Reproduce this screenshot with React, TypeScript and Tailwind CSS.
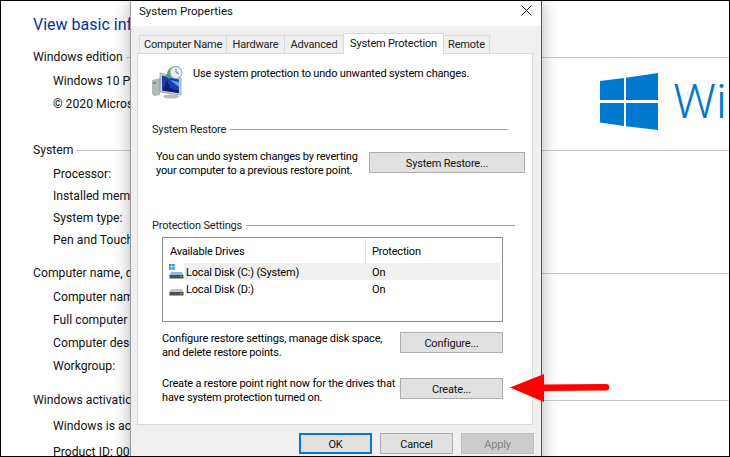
import React from 'react';

const SectionHead = ({ title, className = '' }: { title: string; className?: string }) => (
  <div className={`flex items-center h-[22px] pl-[32px] text-[#111] ${className}`}>
    <span className="whitespace-nowrap">{title}</span>
    <div className="flex-1 h-px bg-[#c8c8c8] ml-[3px]"></div>
  </div>
);

const InfoRow = ({ text, h = 'h-[23px]' }: { text: string; h?: string }) => (
  <div className={`${h} pl-[52px] flex items-center whitespace-nowrap text-[#111]`}>{text}</div>
);

const WinButton = ({ label, className = '' }: { label: string; className?: string }) => (
  <div className={`h-[21px] shrink-0 pt-[2px] flex items-center justify-center bg-[#e1e1e1] border border-[#adadad] text-[#111] ${className}`}>
    {label}
  </div>
);

const Legend = ({ title, className = '' }: { title: string; className?: string }) => (
  <div className={`flex items-center h-[16px] ml-[14px] text-[#222] ${className}`}>
    <span className="whitespace-nowrap pt-[2px]">{title}</span>
    <div className="flex-1 h-px bg-[#a0a0a0] ml-[4px]"></div>
  </div>
);

const RestoreIcon = () => (
  <svg width="32" height="34" viewBox="0 0 32 34" className="shrink-0">
    <path d="M0 15 L8 13 L8 30 L2 31 L0 29 Z" fill="#b4b8b8" />
    <rect x="1.5" y="17" width="2" height="2" fill="#5c8c5c" />
    <ellipse cx="19" cy="31.5" rx="8" ry="2" fill="#b8bcc0" />
    <path d="M8 8 L29 13 L29 30 L8 27 Z" fill="#c8d2de" stroke="#7d8a99" strokeWidth="0.7" />
    <path d="M10 10.5 L27 14.5 L27 28 L10 25.5 Z" fill="#1c3fb0" />
    <path d="M11 25 L15 15 L18 23 L27 26 L27 28 L11 25.7 Z" fill="#0d1f6e" />
    <path d="M18 15 L27 17 L27 22 Z" fill="#5fa8e8" />
    <path d="M15 10 A8 8 0 0 1 26 2 L24 6 A4 4 0 0 0 19 10 L21 10 L17 14 L13 10 Z" fill="#4fb04a" />
    <circle cx="24" cy="7.5" r="6" fill="#e8eef6" stroke="#8aa3bd" />
    <path d="M24 4 L24 7.5 L27 8.5" stroke="#5a7a9a" strokeWidth="1" fill="none" />
  </svg>
);

const DriveIcon = ({ system = false }: { system?: boolean }) => (
  <svg width="15" height="15" viewBox="0 0 15 15" className="shrink-0">
    {system && (
      <g fill="#1c8fe0">
        <rect x="0" y="0" width="2.5" height="2.5" />
        <rect x="3.2" y="0" width="2.5" height="2.5" />
        <rect x="0" y="3.2" width="2.5" height="2.5" />
        <rect x="3.2" y="3.2" width="2.5" height="2.5" />
      </g>
    )}
    <path d="M2 8 L13 8 L14.5 11 L0.5 11 Z" fill={system ? '#8fb7d8' : '#c4c4c4'} />
    <rect x="0.5" y="11" width="14" height="3.5" fill="#4a4f52" />
    <rect x="11" y="12" width="2" height="1" fill="#48d048" />
  </svg>
);

const WindowsLogo = () => (
  <svg width="58" height="57" viewBox="0 0 58 57" className="shrink-0">
    <path d="M0 8 L24 5 L24 27 L0 27 Z" fill="#0078d0" />
    <path d="M26 4.7 L58 0 L58 27 L26 27 Z" fill="#0078d0" />
    <path d="M0 30 L24 30 L24 53 L0 49.5 Z" fill="#0078d0" />
    <path d="M26 30 L58 30 L58 57 L26 53.3 Z" fill="#0078d0" />
  </svg>
);

const tabs = [
  { label: 'Computer Name', w: 'w-[87px]' },
  { label: 'Hardware', w: 'w-[58px]' },
  { label: 'Advanced', w: 'w-[59px]' },
];

export default function App() {
  return (
    <div className="relative w-[730px] h-[457px] overflow-hidden bg-white border border-black font-['Roboto',sans-serif] text-[12.2px] leading-[14px]">
      {/* window behind the dialog */}
      <div className="flex flex-col">
        <h1 className="h-[22px] mt-[13px] pl-[32px] flex items-center text-[16px] text-[#003399] whitespace-nowrap">
          View basic information about your computer
        </h1>
        <SectionHead title="Windows edition" className="mt-[10px]" />
        <div className="flex h-[71px]">
          <div className="w-[599px] shrink-0 pt-px">
            <InfoRow text="Windows 10 Pro" />
            <InfoRow text="© 2020 Microsoft Corporation. All rights reserved." />
          </div>
          <div className="flex items-center gap-[15px] h-[57px] mt-[5px]">
            <WindowsLogo />
            <span className="text-[48px] leading-[57px] font-light text-[#0078d0] whitespace-nowrap">Windows 10</span>
          </div>
        </div>
        <SectionHead title="System" />
        <div className="pt-[2px] h-[101px]">
          <InfoRow text="Processor:" h="h-[22px]" />
          <InfoRow text="Installed memory (RAM):" h="h-[22px]" />
          <InfoRow text="System type:" h="h-[22px]" />
          <InfoRow text="Pen and Touch:" h="h-[22px]" />
        </div>
        <SectionHead title="Computer name, domain, and workgroup settings" />
        <div className="pt-px h-[105px]">
          <InfoRow text="Computer name:" />
          <InfoRow text="Full computer name:" />
          <InfoRow text="Computer description:" />
          <InfoRow text="Workgroup:" />
        </div>
        <SectionHead title="Windows activation" />
        <div className="pt-px">
          <InfoRow text="Windows is activated" h="h-[28px]" />
          <InfoRow text="Product ID: 00330" h="h-[24px]" />
        </div>
      </div>

      {/* System Properties dialog */}
      <div className="absolute left-[129px] top-0 w-[412px] h-[470px] bg-[#f0f0f0] border-x border-l-[#9a9a9a] border-r-[#555] shadow-[0_0_16px_rgba(0,0,0,0.3)] text-[11px] tracking-[-0.18px]">
        <div className="h-[25px] bg-white flex justify-between pl-[8px] pr-[9px] text-[#111]">
          <span className="mt-[3px] text-[11.5px] tracking-normal">System Properties</span>
          <svg width="11" height="11" viewBox="0 0 11 11" className="mt-[4px]">
            <path d="M0.5 0.5 L10.5 10.5 M10.5 0.5 L0.5 10.5" stroke="#111" strokeWidth="1" />
          </svg>
        </div>

        <div className="relative z-10 flex items-end h-[21px] mt-[7px] ml-[8px] -mb-px whitespace-nowrap">
          {tabs.map((t) => (
            <div key={t.label} className={`${t.w} h-[19px] pt-px flex items-center justify-center border border-r-0 border-[#d9d9d9] text-[#222]`}>
              {t.label}
            </div>
          ))}
          <div className="w-[101px] h-[21px] flex items-center justify-center bg-white border border-b-0 border-[#d9d9d9] text-[#111]">
            System Protection
          </div>
          <div className="w-[46px] h-[19px] pt-px flex items-center justify-center border border-l-0 border-[#d9d9d9] text-[#222]">
            Remote
          </div>
        </div>

        <div className="w-[396px] h-[372px] ml-[6px] bg-white border border-[#d9d9d9]">
          <div className="flex mt-[11px] h-[33px] ml-[14px]">
            <RestoreIcon />
            <p className="ml-[9px] mt-[2px] whitespace-nowrap">Use system protection to undo unwanted system changes.</p>
          </div>

          <Legend title="System Restore" className="mt-[23px] mr-[24px]" />
          <div className="flex justify-between mt-[12px] ml-[18px] mr-[7px] h-[28px]">
            <p className="whitespace-nowrap pt-px">
              You can undo system changes by reverting
              <br />
              your computer to a previous restore point.
            </p>
            <WinButton label="System Restore..." className="w-[156px] mt-[3px]" />
          </div>

          <Legend title="Protection Settings" className="mt-[40px] mr-[17px]" />
          <div className="mt-[4px] ml-[24px] w-[341px] h-[85px] border border-[#8a8a8a]">
            <div className="flex h-[25px] items-center">
              <span className="w-[202px] pl-[7px] pt-[2px]">Available Drives</span>
              <div className="w-px h-[24px] bg-[#e3e3e3]"></div>
              <span className="ml-[6px] pt-[2px]">Protection</span>
            </div>
            <div className="flex h-[17px] items-center pl-[6px]">
              <DriveIcon system />
              <div className="flex flex-1 h-full pt-[2px] items-center bg-[#f0f0f0] mr-[2px] pl-[2px]">
                <span className="w-[186px]">Local Disk (C:) (System)</span>
                <span>On</span>
              </div>
            </div>
            <div className="flex h-[17px] items-center pl-[6px]">
              <DriveIcon />
              <div className="flex flex-1 h-full pt-[2px] items-center mr-[2px] pl-[2px]">
                <span className="w-[186px]">Local Disk (D:)</span>
                <span>On</span>
              </div>
            </div>
          </div>

          <div className="flex mt-[9px] ml-[24px] h-[28px]">
            <p className="w-[238px] whitespace-nowrap pt-px">
              Configure restore settings, manage disk space,
              <br />
              and delete restore points.
            </p>
            <WinButton label="Configure..." className="w-[103px] mt-px" />
          </div>

          <div className="flex mt-[17px] ml-[24px] h-[28px]">
            <p className="w-[238px] whitespace-nowrap pt-px">
              Create a restore point right now for the drives that
              <br />
              have system protection turned on.
            </p>
            <WinButton label="Create..." className="w-[103px] mt-[2px]" />
          </div>
        </div>

        <div className="flex gap-[8px] mt-[8px] ml-[168px]">
          <div className="w-[73px] h-[21px] pt-[2px] flex items-center justify-center bg-[#e1e1e1] border-2 border-[#0078d7] text-[#111]">
            OK
          </div>
          <WinButton label="Cancel" className="w-[73px]" />
          <div className="w-[73px] h-[21px] pt-[2px] flex items-center justify-center bg-[#cccccc] border border-[#bfbfbf] text-[#838383]">
            Apply
          </div>
        </div>
      </div>

      {/* red annotation arrow */}
      <svg width="104" height="32" viewBox="0 0 104 32" className="absolute left-[507px] top-[371px]">
        <path d="M2 15.5 L36 2 L36 12.5 L98 12 A3 3 0 0 1 98 18.5 L36 19 L36 30 Z" fill="#ff0000" />
      </svg>
    </div>
  );
}
